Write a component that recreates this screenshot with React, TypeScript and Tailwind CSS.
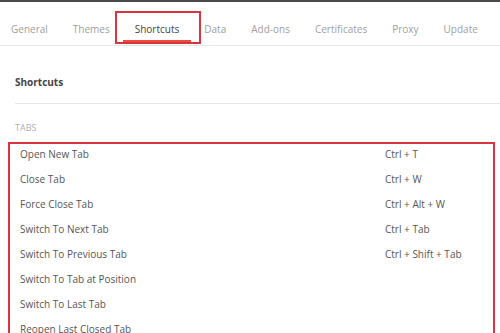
import React from "react";

const tabs = ["General", "Themes", "Shortcuts", "Data", "Add-ons", "Certificates", "Proxy", "Update"];

const shortcuts: [string, string][] = [
  ["Open New Tab", "Ctrl + T"],
  ["Close Tab", "Ctrl + W"],
  ["Force Close Tab", "Ctrl + Alt + W"],
  ["Switch To Next Tab", "Ctrl + Tab"],
  ["Switch To Previous Tab", "Ctrl + Shift + Tab"],
  ["Switch To Tab at Position", ""],
  ["Switch To Last Tab", ""],
  ["Reopen Last Closed Tab", ""],
];

export default function App() {
  return (
    <div className="w-[500px] h-[333px] overflow-hidden bg-white font-['Open_Sans',sans-serif] text-[10px] leading-[15px] text-[#555] whitespace-nowrap">
      <div className="h-[2px] bg-[#4a4a4a]" />

      {/* Settings tabs */}
      <div className="flex h-[44px] items-end gap-[25px] border-b border-[#e6e6e6] pb-[1px] pl-[11px]">
        {tabs.map((t) =>
          t === "Shortcuts" ? (
            <div
              key={t}
              className="relative -ml-[20px] -mr-[22px] flex h-[33px] items-center border-2 border-[#d9343f] pl-[18px] pr-[20px] pt-[3px] text-[#444]"
            >
              {t}
              <span className="absolute bottom-0 left-[6px] right-[8px] h-[2px] bg-[#f04d3b]" />
            </div>
          ) : (
            <div key={t} className="flex h-[33px] items-center pt-[3px] text-[#a0a0a0]">
              {t}
            </div>
          )
        )}
      </div>

      <div className="pl-[15px]">
        <div className="border-b border-[#e8e8e8] pb-[13px] pt-[29px] font-bold text-[#444]">Shortcuts</div>
        <div className="pt-[17px] text-[9px] leading-[13px] text-[#b0b0b0]">TABS</div>
      </div>

      {/* Shortcut list */}
      <div className="ml-[8px] mr-[5px] mt-[8px] border-2 border-b-0 border-[#d9343f]">
        {shortcuts.map(([label, key]) => (
          <div key={label} className="flex h-[25px] items-start pl-[10px] pt-[3px]">
            <span className="w-[365px]">{label}</span>
            <span>{key}</span>
          </div>
        ))}
      </div>
    </div>
  );
}
